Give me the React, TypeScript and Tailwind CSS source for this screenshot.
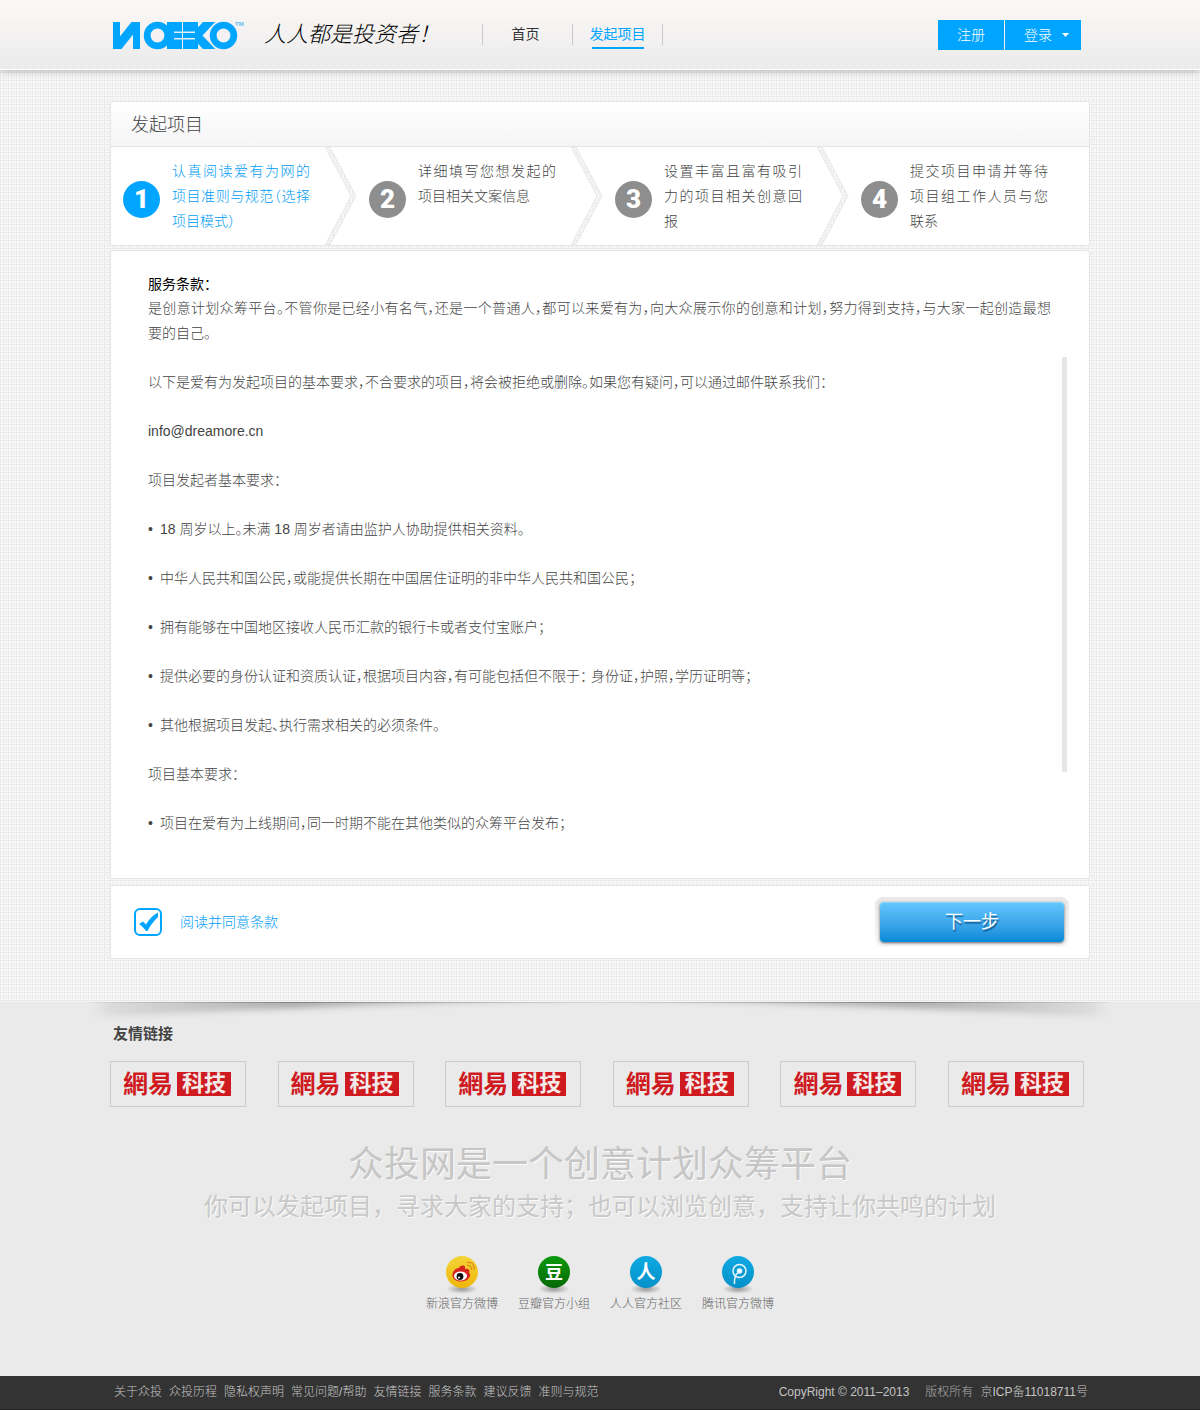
import React from "react";

const steps = [
  "认真阅读爱有为网的项目准则与规范（选择项目模式）",
  "详细填写您想发起的项目相关文案信息",
  "设置丰富且富有吸引力的项目相关创意回报",
  "提交项目申请并等待项目组工作人员与您联系",
];

const terms: { text: string; bullet?: boolean }[] = [
  { text: "以下是爱有为发起项目的基本要求，不合要求的项目，将会被拒绝或删除。如果您有疑问，可以通过邮件联系我们：" },
  { text: "info@dreamore.cn" },
  { text: "项目发起者基本要求：" },
  { bullet: true, text: "18 周岁以上。未满 18 周岁者请由监护人协助提供相关资料。" },
  { bullet: true, text: "中华人民共和国公民，或能提供长期在中国居住证明的非中华人民共和国公民；" },
  { bullet: true, text: "拥有能够在中国地区接收人民币汇款的银行卡或者支付宝账户；" },
  { bullet: true, text: "提供必要的身份认证和资质认证，根据项目内容，有可能包括但不限于： 身份证，护照，学历证明等；" },
  { bullet: true, text: "其他根据项目发起、执行需求相关的必须条件。" },
  { text: "项目基本要求：" },
  { bullet: true, text: "项目在爱有为上线期间，同一时期不能在其他类似的众筹平台发布；" },
];

const footerLinks = ["关于众投", "众投历程", "隐私权声明", "常见问题/帮助", "友情链接", "服务条款", "建议反馈", "准则与规范"];

function Backdrop() {
  return (
    <svg className="absolute inset-0 -z-10 h-full w-full" aria-hidden="true">
      <defs>
        <pattern id="fret" width="8" height="8" patternUnits="userSpaceOnUse">
          <rect width="8" height="8" fill="#f7f7f7" />
          <path d="M0.5 8V0.5H8M3.5 7V3.5H7M5.5 7V5.5H7" fill="none" stroke="#e9e9e9" />
        </pattern>
      </defs>
      <rect width="100%" height="100%" fill="url(#fret)" />
    </svg>
  );
}

function Logo() {
  return (
    <svg width="132" height="32" viewBox="112 19 132 32" role="img" aria-label="NOEKO">
      <g fill="#00a5ff" stroke="none">
        <rect x="113" y="22" width="7" height="27" />
        <rect x="133" y="22" width="7" height="27" />
        <rect x="167" y="22" width="15" height="27" />
        <rect x="183" y="22" width="15" height="27" />
      </g>
      <svg x="113" y="22" width="27" height="27" viewBox="113 22 27 27">
        <line x1="115" y1="50" x2="138" y2="21" stroke="#00a5ff" strokeWidth="9" />
      </svg>
      <svg x="190" y="22" width="30" height="27" viewBox="190 22 30 27">
        <g stroke="#00a5ff" strokeWidth="9">
          <line x1="194" y1="38" x2="212" y2="19" />
          <line x1="194" y1="33" x2="212" y2="52" />
        </g>
      </svg>
      <circle cx="157.5" cy="35.5" r="10.3" fill="#f3f1f1" stroke="#00a5ff" strokeWidth="6.8" />
      <circle cx="223.5" cy="35.5" r="10.3" fill="#f3f1f1" stroke="#00a5ff" strokeWidth="6.8" />
      <g fill="#e4f0f6">
        <rect x="174" y="31.500" width="8" height="1.500" />
        <rect x="174" y="38" width="8" height="1.500" />
        <rect x="183" y="31.500" width="12" height="1.500" />
        <rect x="183" y="38" width="12" height="1.500" />
      </g>
      <text x="235" y="26" fontSize="6" fontWeight="700" fill="#58bdf5" fontFamily="Liberation Sans, sans-serif">TM</text>
    </svg>
  );
}

function Header() {
  return (
    <header className="relative z-10 h-[70px] border-b border-white bg-linear-to-b from-[#fcf8f7] to-[#ebebeb] shadow-[0_1px_7px_rgba(0,0,0,0.28)]">
      <div className="mx-auto flex h-full max-w-[980px] items-center pl-0.5">
        <Logo />
        <p className="ml-5 w-44 text-[22px] leading-8 font-light whitespace-nowrap text-black italic [font-feature-settings:normal]">人人都是投资者！</p>
        <nav className="ml-[42px]">
          <ul className="flex border-l border-[#c8c8c8] text-sm leading-[21px]">
            <li className="w-[90px] border-r border-[#c8c8c8] pr-1 text-center text-[#333]">
              <a href="#home">首页</a>
            </li>
            <li className="w-[90px] border-r border-[#c8c8c8] text-center">
              <a href="#start" aria-current="page" className="relative inline-block text-[#00a5ff]">
                发起项目
                <span className="absolute inset-x-0.5 -bottom-1 h-0.5 bg-[#00a5ff]" />
              </a>
            </li>
          </ul>
        </nav>
        <div className="mr-[9px] ml-auto flex gap-px text-sm leading-[30px] font-light text-white">
          <a href="#register" className="bg-[#00a5ff] px-[19px]">注册</a>
          <button type="button" className="flex items-center gap-2.5 bg-[#00a5ff] pr-3 pl-[19px]">
            登录
            <svg width="7" height="4" viewBox="0 0 7 4" aria-hidden="true"><path d="M0 0H7L3.5 4Z" fill="#fff" /></svg>
          </button>
        </div>
      </div>
    </header>
  );
}

function Chevron() {
  return (
    <svg className="absolute top-0 right-0 h-full w-8" viewBox="0 0 32 98" preserveAspectRatio="none" aria-hidden="true">
      <path d="M0 0H5L31 49L5 98H0L26 49Z" fill="url(#fret)" stroke="#e9e9e9" />
    </svg>
  );
}

function Steps() {
  return (
    <section className="rounded-t-[3px] border border-[#e5e5e5] bg-white">
      <h1 className="rounded-t-[3px] border-b border-[#e5e5e5] bg-linear-to-b from-white to-[#f5f5f5] px-5 pt-0.5 text-lg leading-[42px] font-light text-[#444]">发起项目</h1>
      <ol className="flex">
        {steps.map((text, i) => (
          <li key={text} className={i < 3 ? "relative flex w-[246px] gap-3 pl-3" : "relative flex flex-1 gap-3 pl-3"}>
            <span className={i === 0 ? "mt-[34px] h-[37px] w-[37px] shrink-0 rounded-full bg-[#00a5ff] text-center font-[Impact,Roboto] text-[26px] leading-[37px] font-black text-white" : "mt-[34px] h-[37px] w-[37px] shrink-0 rounded-full bg-[#8e8e8e] text-center font-[Impact,Roboto] text-[26px] leading-[37px] font-black text-white"}>{i + 1}</span>
            <p className={i === 0 ? "my-3 h-[74px] w-[138px] text-justify leading-[25px] font-light text-[#009cf5]" : "my-3 h-[74px] w-[138px] text-justify leading-[25px] font-light text-[#444]"}>{text}</p>
            {i < 3 && <Chevron />}
          </li>
        ))}
      </ol>
    </section>
  );
}

function Terms() {
  return (
    <section className="mt-1 flex gap-[11px] rounded-t-[3px] border border-[#e5e5e5] bg-white pt-[21px] pr-[22px] pb-[42px] pl-[37px]">
      <div className="min-w-0 flex-1 leading-[25px] font-light text-[#444]">
        <h2 className="leading-6 font-normal text-black">服务条款：</h2>
        <p className="text-justify">
          是创意计划众筹平台。不管你是已经小有名气，还是一个普通人，都可以来爱有为，向大众展示你的创意和计划，努力得到支持，与大家一起创造最想<span className="whitespace-nowrap">要的自己。</span>
        </p>
        {terms.map((t) => (
          <p key={t.text} className="mt-6 flex">
            {t.bullet && <span className="w-3 shrink-0">•</span>}
            <span>{t.text}</span>
          </p>
        ))}
      </div>
      <div className="mt-[85px] h-[415px] w-[5px] bg-[#e6e6e6]" />
    </section>
  );
}

function Agree() {
  return (
    <form className="mt-1.5 flex items-center justify-between border border-[#e5e5e5] bg-white py-[11px] pr-5 pl-[23px]" onSubmit={(e) => e.preventDefault()}>
      <label className="flex items-center gap-[18px] font-light text-[#009cf5]">
        <span className="relative block h-7 w-7">
          <input type="checkbox" defaultChecked className="peer block h-7 w-7 appearance-none rounded-[6px] border-2 border-[#00a5ff] bg-white" />
          <svg className="pointer-events-none absolute inset-0 hidden peer-checked:block" width="28" height="28" viewBox="0 0 28 28" aria-hidden="true">
            <path d="M5 16L9 13.5L12 16.5C15 11.5 19 7 24 4.5V9C19.5 13 16 18 13.500 23H12C10 20 8 18 5 16Z" fill="#00a5ff" />
          </svg>
        </span>
        阅读并同意条款
      </label>
      <div className="rounded-lg bg-linear-to-b from-[#e8e8e8] to-[#f8f8f8] p-[5px]">
        <button type="submit" className="block h-10 w-[184px] rounded bg-linear-to-b from-[#65c8ff] to-[#0089d8] text-lg leading-10 text-white shadow-[0_1px_3px_rgba(0,0,0,0.6),inset_0_1px_0_#8ad8ff] text-shadow-[1px_2px_1px_rgba(0,50,90,0.6)]">下一步</button>
      </div>
    </form>
  );
}

function FooterShadow() {
  return (
    <svg className="absolute inset-x-0 top-0 h-10 w-full" viewBox="0 0 1200 40" preserveAspectRatio="none" aria-hidden="true">
      <defs>
        <linearGradient id="shade" x1="90" x2="1110" y1="0" y2="0" gradientUnits="userSpaceOnUse">
          <stop offset="0" stopColor="#000" stopOpacity="0.04" />
          <stop offset="0.2" stopColor="#000" stopOpacity="0.26" />
          <stop offset="0.5" stopColor="#000" stopOpacity="0.08" />
          <stop offset="0.8" stopColor="#000" stopOpacity="0.26" />
          <stop offset="1" stopColor="#000" stopOpacity="0.04" />
        </linearGradient>
        <filter id="soft" x="-5%" y="-100%" width="110%" height="300%">
          <feGaussianBlur stdDeviation="7 3" />
        </filter>
      </defs>
      <path d="M100 -6H1100V15Q850 2 600 -3Q350 2 100 15Z" fill="url(#shade)" filter="url(#soft)" />
      <rect x="90" y="0" width="1020" height="1" fill="url(#shade)" />
    </svg>
  );
}

function PartnerLink() {
  return (
    <a href="#netease" className="flex h-[46px] w-[136px] items-center border border-[#cbcbcb] pl-3 font-bold">
      <span className="text-[25px] leading-6 text-[#cf1a1f]">網易</span>
      <span className="ml-1 w-[54px] bg-[#cf1a1f] text-center text-[22px] leading-6 text-[#f4eaea]">科技</span>
    </a>
  );
}

function WeiboMark() {
  return (
    <g>
      <path d="M6.500 20C6 15 10 12 13 12C13 9.500 18 8.500 19 10.500V13C22 12 24.500 14 23 16.500C26 19 23 25.500 15 25.500C10 25.500 7 23 6.500 20Z" fill="#d8241f" />
      <ellipse cx="14.500" cy="20" rx="6.500" ry="4.500" fill="#fff" />
      <circle cx="14" cy="20.500" r="3.400" fill="#111" />
      <circle cx="13" cy="21.500" r="1" fill="#fff" />
      <path d="M21 9.500C24 9 26 11 25.500 14M21 6.500C26 5.500 29 9 28 13.500" fill="none" stroke="#e0861c" strokeWidth="1.200" />
    </g>
  );
}

function TencentMark() {
  return (
    <g fill="none" stroke="#e8f6fc" strokeWidth="1.500">
      <circle cx="17.500" cy="15" r="6.500" />
      <circle cx="17.500" cy="15" r="2" fill="#fff" />
      <path d="M16.500 16C13.500 18.500 12 22 12.500 28" />
    </g>
  );
}

const glyph = { fill: "#fff", textAnchor: "middle" as const, fontWeight: 700 };
const socials: { label: string; top: string; bottom: string; mark: React.ReactNode }[] = [
  { label: "新浪官方微博", top: "#f3d437", bottom: "#efb70c", mark: <WeiboMark /> },
  { label: "豆瓣官方小组", top: "#0d9a0d", bottom: "#056805", mark: <text x="16" y="22.500" fontSize="18" {...glyph}>豆</text> },
  { label: "人人官方社区", top: "#0fa9e2", bottom: "#0591c9", mark: <text x="16" y="22.500" fontSize="19" {...glyph}>人</text> },
  { label: "腾讯官方微博", top: "#0fa9e2", bottom: "#0591c9", mark: <TencentMark /> },
];

function Footer() {
  return (
    <footer className="relative mt-[43px] bg-[#eaeaea]">
      <FooterShadow />
      <div className="relative mx-auto max-w-[980px] pt-5">
        <h2 className="pl-[3px] text-[15px] leading-6 font-bold text-[#444]">友情链接</h2>
        <div className="mt-[15px] mr-1.5 flex justify-between">
          {[0, 1, 2, 3, 4, 5].map((n) => <PartnerLink key={n} />)}
        </div>
        <p className="mt-9 text-center text-4xl leading-[44px] whitespace-nowrap text-[#c6c6c6] text-shadow-[1px_1px_0_#fafafa]">众投网是一个创意计划众筹平台</p>
        <p className="mt-0.5 text-center text-2xl leading-9 whitespace-nowrap text-[#c8c8c8] text-shadow-[1px_1px_0_#fafafa] [font-feature-settings:normal]">你可以发起项目，寻求大家的支持；也可以浏览创意，支持让你共鸣的计划</p>
        <ul className="mt-[31px] flex justify-center gap-5">
          {socials.map((s, i) => (
            <li key={s.label}>
              <a href="#social" className="flex flex-col items-center text-xs leading-4 font-light text-[#666]">
                <svg width="36" height="40" viewBox="-2 0 36 40" aria-hidden="true">
                  <defs>
                    <linearGradient id={`disc${i}`} x2="0" y2="1"><stop stopColor={s.top} /><stop offset="1" stopColor={s.bottom} /></linearGradient>
                    <radialGradient id={`drop${i}`}><stop stopColor="#999" /><stop offset="1" stopColor="#999" stopOpacity="0" /></radialGradient>
                  </defs>
                  <ellipse cx="16" cy="33" rx="16" ry="5" fill={`url(#drop${i})`} />
                  <circle cx="16" cy="16" r="16" fill={`url(#disc${i})`} />
                  {s.mark}
                </svg>
                {s.label}
              </a>
            </li>
          ))}
        </ul>
      </div>
      <div className="mt-16 border-b border-[#222] bg-[#333] text-xs leading-[33px] font-light text-[#c4c4c4]">
        <div className="mx-auto flex max-w-[980px] justify-between pr-0.5 pl-1">
          <nav className="flex gap-[7px]">
            {footerLinks.map((l) => <a key={l} href="#about">{l}</a>)}
          </nav>
          <p className="flex">
            <span className="mr-4">CopyRight © 2011–2013</span>
            <span className="mr-[7px] text-[#aaa]">版权所有</span>
            <span>京ICP备11018711号</span>
          </p>
        </div>
      </div>
    </footer>
  );
}

export default function App() {
  return (
    <div lang="zh-CN" className="relative isolate font-['Liberation_Sans','Noto_Sans_CJK_SC',sans-serif] text-sm [font-feature-settings:'halt']">
      <Backdrop />
      <Header />
      <main className="mx-auto mt-[31px] max-w-[980px]">
        <Steps />
        <Terms />
        <Agree />
      </main>
      <Footer />
    </div>
  );
}
